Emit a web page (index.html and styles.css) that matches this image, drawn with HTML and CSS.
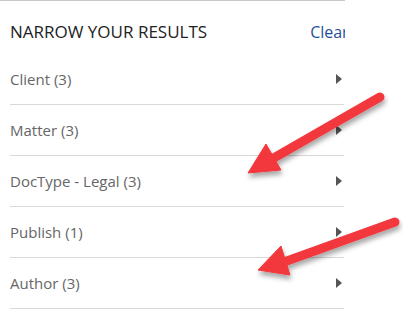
FILE: index.html
```
<!DOCTYPE html>
<html>
<head>
<meta charset="utf-8">
<link rel="stylesheet" href="styles.css">
</head>
<body>
<div class="panel">
  <div class="header">
    <span class="title">NARROW YOUR RESULTS</span>
    <a class="clear">Clear</a>
  </div>
  <ul class="list">
    <li class="row"><span>Client (3)</span><span class="caret"></span></li>
    <li class="row"><span>Matter (3)</span><span class="caret"></span></li>
    <li class="row"><span>DocType - Legal (3)</span><span class="caret"></span></li>
    <li class="row"><span>Publish (1)</span><span class="caret"></span></li>
    <li class="row"><span>Author (3)</span><span class="caret"></span></li>
  </ul>
</div>
<svg class="arrows" width="403" height="316" viewBox="0 0 403 316">
  <defs>
    <filter id="sh" x="-20%" y="-20%" width="140%" height="150%">
      <feDropShadow dx="1" dy="4" stdDeviation="2.5" flood-color="#000" flood-opacity="0.35"/>
    </filter>
  </defs>
  <g filter="url(#sh)" fill="#f2383d" stroke="#f2383d">
    <line x1="380" y1="97" x2="272" y2="159" stroke-width="9" stroke-linecap="round"/>
    <polygon points="248,173 266,144 281,170" stroke-width="1" stroke-linejoin="round"/>
    <line x1="395" y1="222" x2="284" y2="262" stroke-width="9" stroke-linecap="round"/>
    <polygon points="258,270 281,246 290,275" stroke-width="1" stroke-linejoin="round"/>
  </g>
</svg>
</body>
</html>
```
FILE: styles.css
```
html, body {
  margin: 0;
  padding: 0;
  background: #fff;
}
body {
  width: 403px;
  height: 316px;
  overflow: hidden;
  position: relative;
  font-family: "Open Sans", "Liberation Sans", sans-serif;
}
.panel {
  width: 345px;
  overflow: hidden;
  border-top: 1px solid #c8c8c8;
}
.header {
  display: flex;
  align-items: baseline;
  white-space: nowrap;
  padding: 20px 0 11px 10px;
  line-height: 22px;
  font-size: 17px;
}
.title {
  color: #222;
}
.clear {
  color: #1f4f9a;
  font-size: 16px;
  margin-left: 103px;
}
.list {
  list-style: none;
  margin: 0 1px 0 10px;
  padding: 0;
}
.row {
  height: 50px;
  border-bottom: 1px solid #d9d9d9;
  display: flex;
  align-items: center;
  justify-content: space-between;
  font-size: 15px;
  line-height: 20px;
  color: #666;
}
.caret {
  width: 0;
  height: 0;
  border-top: 5px solid transparent;
  border-bottom: 5px solid transparent;
  border-left: 6px solid #555;
  margin-right: 2px;
}
.arrows {
  position: absolute;
  left: 0;
  top: 0;
  pointer-events: none;
}
```
